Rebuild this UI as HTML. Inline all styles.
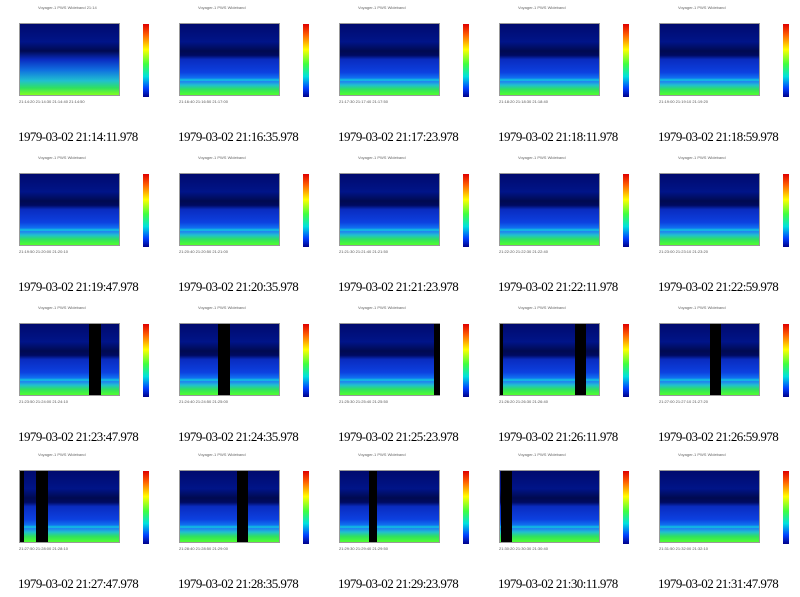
<!DOCTYPE html><html><head><style>
body{margin:0;background:#fff;width:800px;height:596px;overflow:hidden;position:relative;font-family:"Liberation Serif",serif}
.c{position:absolute;width:160px;height:150px}
.t{position:absolute;left:38px;top:5px;font:4px "Liberation Sans",sans-serif;color:#666;white-space:nowrap}
.p{position:absolute;left:19px;top:23px;width:101px;height:73px;background:linear-gradient(#000a6e 0%,#001488 25%,#000a50 38%,#000a60 44%,#0a2cc0 50%,#0c40e0 68%,#1070f0 76%,#10c8e0 79%,#2080f0 81%,#20c0d0 86%,#30e060 92%,#50ff30 100%);border:1px solid #999;box-sizing:border-box}
.b{position:absolute;top:0;height:71px;background:#000}
.cb{position:absolute;left:143px;top:24px;width:6px;height:73px;background:linear-gradient(#e00000,#ff6000 15%,#ffff00 35%,#40ff40 55%,#00e0e0 72%,#0040ff 88%,#00008a)}
.x{position:absolute;left:19px;top:99px;font:4px "Liberation Sans",sans-serif;color:#555;white-space:nowrap}
.l{position:absolute;left:18px;top:129px;font-size:13px;color:#000;white-space:nowrap;letter-spacing:-0.55px}
</style></head><body>
<div class="c" style="left:0;top:0"><div class="t">Voyager-1 PWS Wideband 21:14</div><div class="p" style="background:linear-gradient(#000a6e,#001488 25%,#000a50 38%,#0a2cc0 50%,#1070e0 65%,#20c0d0 80%,#30e060 90%,#80ff20)"></div><div class="cb"></div><div class="x">21:14:20 21:14:30 21:14:40 21:14:50</div><div class="l">1979-03-02 21:14:11.978</div></div>
<div class="c" style="left:160px;top:0"><div class="t">Voyager-1 PWS Wideband</div><div class="p"></div><div class="cb"></div><div class="x">21:16:40 21:16:50 21:17:00</div><div class="l">1979-03-02 21:16:35.978</div></div>
<div class="c" style="left:320px;top:0"><div class="t">Voyager-1 PWS Wideband</div><div class="p"></div><div class="cb"></div><div class="x">21:17:30 21:17:40 21:17:50</div><div class="l">1979-03-02 21:17:23.978</div></div>
<div class="c" style="left:480px;top:0"><div class="t">Voyager-1 PWS Wideband</div><div class="p"></div><div class="cb"></div><div class="x">21:18:20 21:18:30 21:18:40</div><div class="l">1979-03-02 21:18:11.978</div></div>
<div class="c" style="left:640px;top:0"><div class="t">Voyager-1 PWS Wideband</div><div class="p"></div><div class="cb"></div><div class="x">21:19:00 21:19:10 21:19:20</div><div class="l">1979-03-02 21:18:59.978</div></div>

<div class="c" style="left:0;top:150px"><div class="t">Voyager-1 PWS Wideband</div><div class="p"></div><div class="cb"></div><div class="x">21:19:50 21:20:00 21:20:10</div><div class="l">1979-03-02 21:19:47.978</div></div>
<div class="c" style="left:160px;top:150px"><div class="t">Voyager-1 PWS Wideband</div><div class="p"></div><div class="cb"></div><div class="x">21:20:40 21:20:50 21:21:00</div><div class="l">1979-03-02 21:20:35.978</div></div>
<div class="c" style="left:320px;top:150px"><div class="t">Voyager-1 PWS Wideband</div><div class="p"></div><div class="cb"></div><div class="x">21:21:30 21:21:40 21:21:50</div><div class="l">1979-03-02 21:21:23.978</div></div>
<div class="c" style="left:480px;top:150px"><div class="t">Voyager-1 PWS Wideband</div><div class="p"></div><div class="cb"></div><div class="x">21:22:20 21:22:30 21:22:40</div><div class="l">1979-03-02 21:22:11.978</div></div>
<div class="c" style="left:640px;top:150px"><div class="t">Voyager-1 PWS Wideband</div><div class="p"></div><div class="cb"></div><div class="x">21:23:00 21:23:10 21:23:20</div><div class="l">1979-03-02 21:22:59.978</div></div>

<div class="c" style="left:0;top:300px"><div class="t">Voyager-1 PWS Wideband</div><div class="p"><div class="b" style="left:69px;width:12px"></div></div><div class="cb"></div><div class="x">21:23:50 21:24:00 21:24:10</div><div class="l">1979-03-02 21:23:47.978</div></div>
<div class="c" style="left:160px;top:300px"><div class="t">Voyager-1 PWS Wideband</div><div class="p"><div class="b" style="left:38px;width:12px"></div></div><div class="cb"></div><div class="x">21:24:40 21:24:50 21:25:00</div><div class="l">1979-03-02 21:24:35.978</div></div>
<div class="c" style="left:320px;top:300px"><div class="t">Voyager-1 PWS Wideband</div><div class="p"><div class="b" style="left:94px;width:6px"></div></div><div class="cb"></div><div class="x">21:25:30 21:25:40 21:25:50</div><div class="l">1979-03-02 21:25:23.978</div></div>
<div class="c" style="left:480px;top:300px"><div class="t">Voyager-1 PWS Wideband</div><div class="p"><div class="b" style="left:0;width:3px"></div><div class="b" style="left:75px;width:11px"></div></div><div class="cb"></div><div class="x">21:26:20 21:26:30 21:26:40</div><div class="l">1979-03-02 21:26:11.978</div></div>
<div class="c" style="left:640px;top:300px"><div class="t">Voyager-1 PWS Wideband</div><div class="p"><div class="b" style="left:50px;width:11px"></div></div><div class="cb"></div><div class="x">21:27:00 21:27:10 21:27:20</div><div class="l">1979-03-02 21:26:59.978</div></div>

<div class="c" style="left:0;top:447px"><div class="t">Voyager-1 PWS Wideband</div><div class="p"><div class="b" style="left:0;width:4px"></div><div class="b" style="left:16px;width:12px"></div></div><div class="cb"></div><div class="x">21:27:50 21:28:00 21:28:10</div><div class="l">1979-03-02 21:27:47.978</div></div>
<div class="c" style="left:160px;top:447px"><div class="t">Voyager-1 PWS Wideband</div><div class="p"><div class="b" style="left:57px;width:11px"></div></div><div class="cb"></div><div class="x">21:28:40 21:28:50 21:29:00</div><div class="l">1979-03-02 21:28:35.978</div></div>
<div class="c" style="left:320px;top:447px"><div class="t">Voyager-1 PWS Wideband</div><div class="p"><div class="b" style="left:29px;width:8px"></div></div><div class="cb"></div><div class="x">21:29:30 21:29:40 21:29:50</div><div class="l">1979-03-02 21:29:23.978</div></div>
<div class="c" style="left:480px;top:447px"><div class="t">Voyager-1 PWS Wideband</div><div class="p"><div class="b" style="left:1px;width:11px"></div></div><div class="cb"></div><div class="x">21:30:20 21:30:30 21:30:40</div><div class="l">1979-03-02 21:30:11.978</div></div>
<div class="c" style="left:640px;top:447px"><div class="t">Voyager-1 PWS Wideband</div><div class="p"></div><div class="cb"></div><div class="x">21:31:50 21:32:00 21:32:10</div><div class="l">1979-03-02 21:31:47.978</div></div>
</body></html>
